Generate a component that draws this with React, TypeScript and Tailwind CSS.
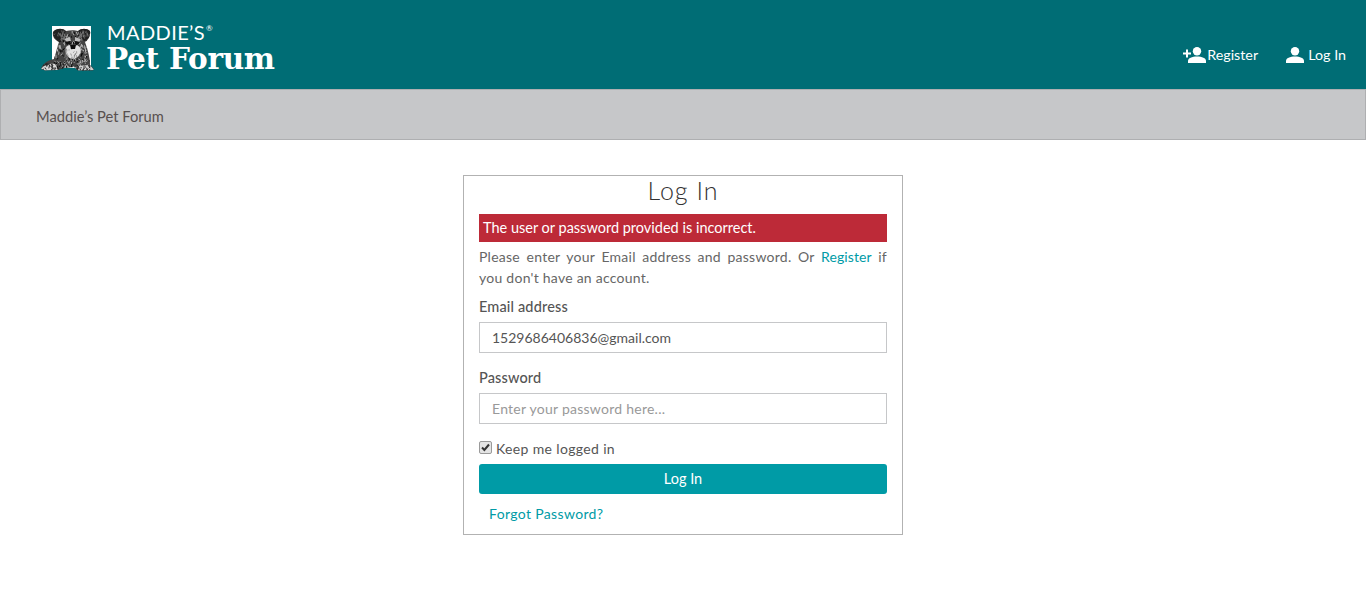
import React from "react";

function fur(seed: number, n: number, x0: number, y0: number, w: number, h: number) {
  let s = seed;
  const r = () => {
    s = (s * 16807) % 2147483647;
    return s / 2147483647;
  };
  const out: string[] = [];
  for (let i = 0; i < n; i++) {
    const x = x0 + r() * w;
    const y = y0 + r() * h;
    const dx = (r() - 0.5) * 3;
    const dy = 1 + r() * 2.5;
    out.push(`M${x.toFixed(1)} ${y.toFixed(1)}l${dx.toFixed(1)} ${dy.toFixed(1)}`);
  }
  return out.join("");
}

function Dog() {
  return (
    <svg width="56" height="46" viewBox="0 0 56 46" className="block">
      <defs>
        <clipPath id="dogBody">
          <path d="M1 44 C2 39 8 35 14 34 C16 28 17 22 19 17 C15 15 12 12 13 7 C16 3 23 3 26 6 C30 5 35 5 38 6 C41 3 47 3 50 6 C51 11 48 15 45 17 C48 25 50 33 50 40 L54 44 L53 45.5 L38 45.5 L34 42 L24 43 L18 45 L5 45.5Z" />
        </clipPath>
      </defs>
      <rect x="12" y="1" width="39" height="42" fill="#fff" />
      <g clipPath="url(#dogBody)">
        <rect x="0" y="0" width="56" height="46" fill="#444" />
        <path d={fur(11, 170, 14, 6, 36, 38)} stroke="#c4c4c4" strokeWidth="0.8" fill="none" />
        <path d={fur(29, 70, 14, 6, 36, 38)} stroke="#0a0a0a" strokeWidth="1" fill="none" />
        <path d="M13 7 C16 3 23 3 26 6 L22 15 L18 16 C15 14 13 11 13 7Z" fill="#222" />
        <path d="M38 6 C41 3 47 3 50 6 C51 10 48 15 45 16 L42 15Z" fill="#222" />
        <path d={fur(7, 22, 14, 5, 11, 9)} stroke="#888" strokeWidth="0.7" fill="none" />
        <path d={fur(5, 22, 39, 5, 11, 9)} stroke="#888" strokeWidth="0.7" fill="none" />
        <path d="M24 14 L30 12 L31 16 L27 17Z M35 16 L35 12 L41 14 L39 17Z" fill="#bdbdbd" />
        <path d="M25 17 L30 16 L31 19 L27 20Z M35 19 L35 16 L40 17 L38 20Z" fill="#111" />
        <path d="M26 22 C29 19 36 19 40 22 C42 27 39 33 33 34 C27 33 24 27 26 22Z" fill="#e2e2e2" />
        <path d={fur(17, 30, 25, 21, 15, 13)} stroke="#777" strokeWidth="0.7" fill="none" />
        <path d="M30 20 L36 20 L35 24 L31 24Z" fill="#0c0c0c" />
        <path d="M1 44 C4 40 9 38 15 39 L18 45 L5 45.5Z" fill="#d9d9d9" />
        <path d={fur(23, 22, 2, 38, 16, 7)} stroke="#222" strokeWidth="0.9" fill="none" />
        <path d="M36 41 L50 40 L54 45 L38 45.5Z" fill="#cfcfcf" />
        <path d={fur(37, 22, 36, 39, 17, 6)} stroke="#222" strokeWidth="0.9" fill="none" />
      </g>
    </svg>
  );
}

function UserIcon({ plus }: { plus?: boolean }) {
  return (
    <svg width={plus ? 23 : 18} height="16" viewBox={plus ? "0 0 23 16" : "0 0 18 16"} fill="#fff" className="block">
      {plus && <path d="M0 5.5h3V2.5h2v3h3v2H5v3H3v-3H0z" />}
      <g transform={plus ? "translate(5 0)" : "translate(0 0)"}>
        <circle cx="9" cy="4.2" r="4.2" />
        <path d="M0 16v-2c0-3 4-4.6 9-4.6s9 1.6 9 4.6v2z" />
      </g>
    </svg>
  );
}

export default function App() {
  return (
    <div className="min-h-[613px] bg-white text-[14px] text-[#555] font-['Lato','Liberation_Sans',sans-serif]">
      <header className="h-[89px] bg-[#006d75] flex justify-between pl-[40px] pr-[20px]">
        <div className="flex items-start pt-[25px]">
          <Dog />
          <div className="ml-[11px] text-white">
            <div className="flex items-start h-[19px] text-[20px] leading-[15px] tracking-[0.4px] font-normal">
              MADDIE’S<span className="text-[8px] leading-[6px] ml-[1px]">®</span>
            </div>
            <div className="text-[29.5px] leading-[32px] font-bold font-['DejaVu_Serif',serif] tracking-[-0.28px] ml-[-1px] mt-[-1px]">
              Pet Forum
            </div>
          </div>
        </div>
        <nav className="flex items-center gap-[28px] pt-[20px] text-white text-[14.3px]">
          <a className="flex items-center"><UserIcon plus /><span className="ml-[1px]">Register</span></a>
          <a className="flex items-center"><UserIcon /><span className="ml-[4px]">Log In</span></a>
        </nav>
      </header>
      <div className="h-[51px] bg-[#c6c7c9] border border-[#aeafb1] flex items-center pl-[35px] pt-[3px] text-[14.7px] text-[#58504f]">
        Maddie’s Pet Forum
      </div>
      <main className="flex justify-center pt-[35px]">
        <div className="w-[440px] h-[360px] border border-[#b2b2b2] px-[15px]">
          <h1 className="text-[25px] leading-[28px] font-light text-center text-[#333] tracking-[1px]">Log In</h1>
          <div className="mt-[10px] h-[28px] bg-[#bd2a38] text-white pl-[4px] leading-[28px] text-[14.5px]">
            The user or password provided is incorrect.
          </div>
          <p className="mt-[5px] leading-[20.5px] text-[#666] text-justify text-[14px] tracking-[0.25px]">
            Please enter your Email address and password. Or <a className="text-[#009ba6] tracking-[0.1px]">Register</a> if you don't have an account.
          </p>
          <label className="block mt-[9px] text-[14.5px] leading-[20px] font-medium tracking-[0.15px] text-[#555]">Email address</label>
          <input
            readOnly
            value="1529686406836@gmail.com"
            className="block mt-[5px] w-full h-[31px] border border-[#c6c7c9] px-[12px] text-[14px] text-[#555] outline-none"
          />
          <label className="block mt-[15px] text-[14.5px] leading-[20px] font-medium tracking-[0.15px] text-[#555]">Password</label>
          <input
            readOnly
            placeholder="Enter your password here..."
            className="block mt-[5px] w-full h-[31px] border border-[#c6c7c9] px-[12px] text-[14px] tracking-[0.25px] placeholder:text-[#999] outline-none"
          />
          <label className="relative flex items-center mt-[13px] h-[22px]">
            <input type="checkbox" defaultChecked className="appearance-none w-[13px] h-[13px] m-0 bg-[#e4e4e4] border border-[#9a9a9a] rounded-[2px] -translate-y-[1px]" />
            <svg width="13" height="13" viewBox="0 0 13 13" className="absolute left-0 top-[4px]">
              <path d="M3 6.5 L5.4 9 L10 3.5" fill="none" stroke="#333" strokeWidth="2" />
            </svg>
            <span className="ml-[4px] tracking-[0.35px]">Keep me logged in</span>
          </label>
          <button className="block mt-[5px] w-full h-[30px] rounded-[3px] bg-[#009ba6] text-white text-[14.5px]">Log In</button>
          <a className="block mt-[10px] ml-[10px] leading-[20px] text-[#009ba6] tracking-[0.35px]">Forgot Password?</a>
        </div>
      </main>
    </div>
  );
}
